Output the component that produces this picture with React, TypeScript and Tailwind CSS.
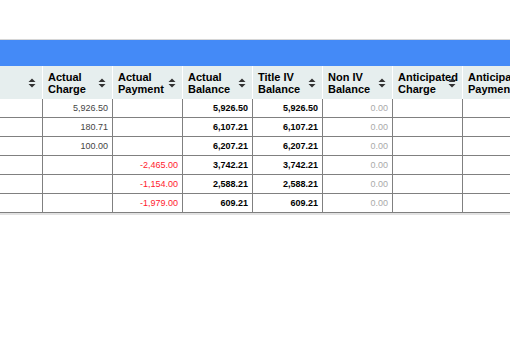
import React from "react";

type Row = {
  charge?: string;
  payment?: string;
  balance: string;
  titleIV: string;
  nonIV: string;
};

const rows: Row[] = [
  { charge: "5,926.50", balance: "5,926.50", titleIV: "5,926.50", nonIV: "0.00" },
  { charge: "180.71", balance: "6,107.21", titleIV: "6,107.21", nonIV: "0.00" },
  { charge: "100.00", balance: "6,207.21", titleIV: "6,207.21", nonIV: "0.00" },
  { payment: "-2,465.00", balance: "3,742.21", titleIV: "3,742.21", nonIV: "0.00" },
  { payment: "-1,154.00", balance: "2,588.21", titleIV: "2,588.21", nonIV: "0.00" },
  { payment: "-1,979.00", balance: "609.21", titleIV: "609.21", nonIV: "0.00" },
];

const headers = [
  ["Actual", "Charge"],
  ["Actual", "Payment"],
  ["Actual", "Balance"],
  ["Title IV", "Balance"],
  ["Non IV", "Balance"],
  ["Anticipated", "Charge"],
  ["Anticipated", "Payment"],
];

const SortIcon = () => (
  <svg
    width="8"
    height="10"
    viewBox="0 0 8 10"
    className="absolute right-[6px] top-1/2 -translate-y-1/2"
  >
    <path d="M4 0.5 L7.5 4 L0.5 4 Z" fill="#333" />
    <path d="M0.5 6 L7.5 6 L4 9.5 Z" fill="#333" />
  </svg>
);

const Cell = ({ children, className = "" }: { children?: React.ReactNode; className?: string }) => (
  <div
    className={`w-[70px] shrink-0 border-r border-[#808080] pr-[4px] text-right leading-[18px] ${className}`}
  >
    {children}
  </div>
);

export default function App() {
  return (
    <div
      className="w-[510px] h-[337px] overflow-hidden bg-white"
      style={{ fontFamily: '"Liberation Sans", Arial, sans-serif' }}
    >
      <div className="h-[39px]" />
      <div className="h-px bg-[#d6d6d6]" />
      <div className="h-[26px] bg-[#448af7]" />

      <div className="w-[560px]">
        {/* header */}
        <div className="flex h-[33px] bg-[#e6eeee] text-[11px] font-bold leading-[12px] text-black">
          <div className="relative w-[43px] shrink-0 border-r border-white">
            <SortIcon />
          </div>
          {headers.map(([a, b], i) => (
            <div
              key={i}
              className="relative flex w-[70px] shrink-0 flex-col justify-center border-r border-white pl-[5px] whitespace-nowrap"
            >
              <span>{a}</span>
              <span>{b}</span>
              <SortIcon />
            </div>
          ))}
        </div>

        {/* rows */}
        {rows.map((r, i) => (
          <div key={i} className="flex h-[19px] border-b border-[#808080] text-[9px]">
            <div className="w-[43px] shrink-0 border-r border-[#808080]" />
            <Cell className="text-[#444]">{r.charge}</Cell>
            <Cell className="text-[#ff1a2e]">{r.payment}</Cell>
            <Cell className="font-bold text-black">{r.balance}</Cell>
            <Cell className="font-bold text-black">{r.titleIV}</Cell>
            <Cell className="text-[#aaaaaa]">{r.nonIV}</Cell>
            <Cell />
            <Cell />
          </div>
        ))}
        <div className="h-[2px] bg-[#e2e2e2]" />
      </div>
    </div>
  );
}
